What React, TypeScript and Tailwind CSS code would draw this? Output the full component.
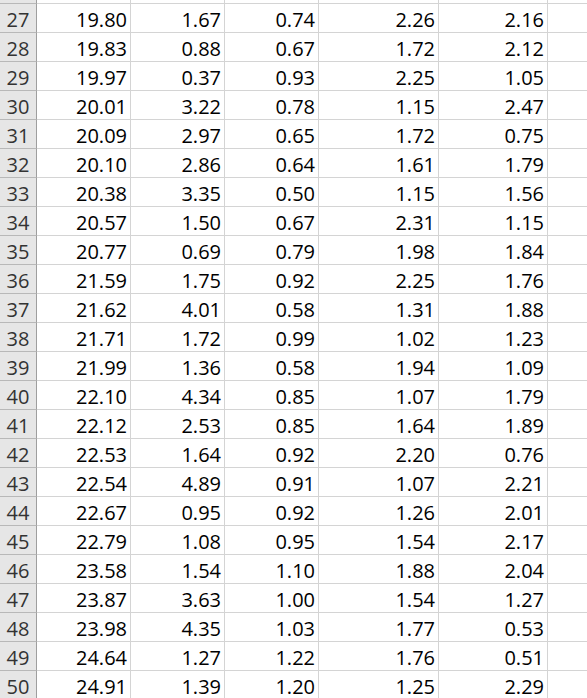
const rows: [number, string[]][] = [
  [27, ['19.80', '1.67', '0.74', '2.26', '2.16']],
  [28, ['19.83', '0.88', '0.67', '1.72', '2.12']],
  [29, ['19.97', '0.37', '0.93', '2.25', '1.05']],
  [30, ['20.01', '3.22', '0.78', '1.15', '2.47']],
  [31, ['20.09', '2.97', '0.65', '1.72', '0.75']],
  [32, ['20.10', '2.86', '0.64', '1.61', '1.79']],
  [33, ['20.38', '3.35', '0.50', '1.15', '1.56']],
  [34, ['20.57', '1.50', '0.67', '2.31', '1.15']],
  [35, ['20.77', '0.69', '0.79', '1.98', '1.84']],
  [36, ['21.59', '1.75', '0.92', '2.25', '1.76']],
  [37, ['21.62', '4.01', '0.58', '1.31', '1.88']],
  [38, ['21.71', '1.72', '0.99', '1.02', '1.23']],
  [39, ['21.99', '1.36', '0.58', '1.94', '1.09']],
  [40, ['22.10', '4.34', '0.85', '1.07', '1.79']],
  [41, ['22.12', '2.53', '0.85', '1.64', '1.89']],
  [42, ['22.53', '1.64', '0.92', '2.20', '0.76']],
  [43, ['22.54', '4.89', '0.91', '1.07', '2.21']],
  [44, ['22.67', '0.95', '0.92', '1.26', '2.01']],
  [45, ['22.79', '1.08', '0.95', '1.54', '2.17']],
  [46, ['23.58', '1.54', '1.10', '1.88', '2.04']],
  [47, ['23.87', '3.63', '1.00', '1.54', '1.27']],
  [48, ['23.98', '4.35', '1.03', '1.77', '0.53']],
  [49, ['24.64', '1.27', '1.22', '1.76', '0.51']],
  [50, ['24.91', '1.39', '1.20', '1.25', '2.29']],
];

const cols = 'grid grid-cols-[37px_94px_94px_94px_120px_109px_1fr]';
const cell = 'border-r border-b border-[#d4d4d4] flex items-end justify-end pr-[3px] pb-[4px]';
const head = 'border-r border-b border-r-[#9e9e9e] border-b-[#b8b8b8] bg-[#e6e6e6] flex items-end justify-center pb-[4px] text-[#333]';

export default function App() {
  return (
    <div
      className="w-[587px] h-[698px] overflow-hidden bg-white text-[20px] leading-[16px] text-black"
      style={{ fontFamily: '"Open Sans", sans-serif', fontStretch: '88%' }}
    >
      <div className={`${cols} h-[4px]`}>
        <div className="border-r border-b border-r-[#9e9e9e] border-b-[#b8b8b8] bg-[#e6e6e6]" />
        {[0, 1, 2, 3, 4].map(i => (
          <div key={i} className="border-r border-b border-[#d4d4d4]" />
        ))}
        <div className="border-b border-[#d4d4d4]" />
      </div>
      {rows.map(([n, vals]) => (
        <div key={n} className={`${cols} h-[29px]`}>
          <div className={head}>{n}</div>
          {vals.map((v, i) => (
            <div key={i} className={cell}>{v}</div>
          ))}
          <div className="border-b border-[#d4d4d4]" />
        </div>
      ))}
    </div>
  );
}
